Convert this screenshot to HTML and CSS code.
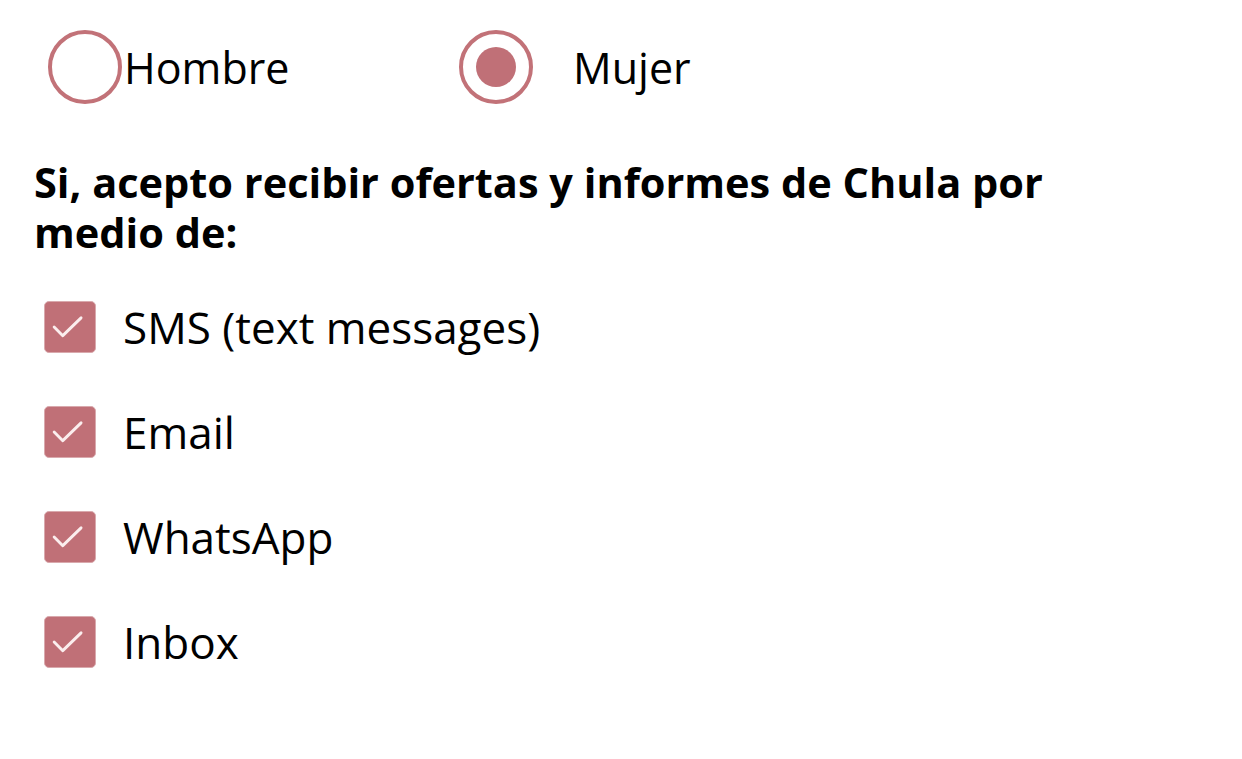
FILE: index.html
```html
<!DOCTYPE html>
<html lang="es">
<head>
  <meta charset="UTF-8" />
  <meta name="viewport" content="width=device-width, initial-scale=1.0"/>
  <title>Preferencias</title>
  <link rel="stylesheet" href="styles.css">
</head>
<body>

  <form class="prefs">
    <div class="gender">
      <label class="radio radio-first">
        <input type="radio" name="gender" value="Hombre">
        <span class="ring"></span>
        <span class="radio-text">Hombre</span>
      </label>
      <label class="radio">
        <input type="radio" name="gender" value="Mujer" checked>
        <span class="ring"></span>
        <span class="radio-text spaced">Mujer</span>
      </label>
    </div>

    <p class="consent">Si, acepto recibir ofertas y informes de Chula por medio de:</p>

    <div class="channels">
      <label class="check">
        <input type="checkbox" checked>
        <span class="box"><svg viewBox="0 0 52 52"><path d="M9.5 26 L18.5 35 L37.5 16.5"/></svg></span>
        SMS (text messages)
      </label>
      <label class="check">
        <input type="checkbox" checked>
        <span class="box"><svg viewBox="0 0 52 52"><path d="M9.5 26 L18.5 35 L37.5 16.5"/></svg></span>
        Email
      </label>
      <label class="check">
        <input type="checkbox" checked>
        <span class="box"><svg viewBox="0 0 52 52"><path d="M9.5 26 L18.5 35 L37.5 16.5"/></svg></span>
        WhatsApp
      </label>
      <label class="check">
        <input type="checkbox" checked>
        <span class="box"><svg viewBox="0 0 52 52"><path d="M9.5 26 L18.5 35 L37.5 16.5"/></svg></span>
        Inbox
      </label>
    </div>
  </form>

</body>
</html>
```

FILE: styles.css
```css
body {
  margin: 0;
  background: #fff;
  color: #000;
  font-family: 'Open Sans', 'Noto Sans', sans-serif;
}

.prefs {
  padding: 30px 34px;
}

.gender {
  display: flex;
  align-items: center;
  padding-left: 14px;
}

.radio {
  display: flex;
  align-items: center;
  font-size: 43px;
  cursor: pointer;
}

.radio-first {
  width: 411px;
}

.radio input,
.check input {
  display: none;
}

.ring {
  box-sizing: border-box;
  width: 74px;
  height: 74px;
  border: 4px solid #c27278;
  border-radius: 50%;
  display: flex;
  align-items: center;
  justify-content: center;
  flex-shrink: 0;
}

.radio input:checked + .ring::after {
  content: "";
  width: 40px;
  height: 40px;
  border-radius: 50%;
  background: #c07077;
}

.radio-text {
  margin-left: 2px;
}

.radio-text.spaced {
  margin-left: 40px;
}

.consent {
  margin: 53px 0 0;
  font-size: 41.5px;
  font-weight: bold;
  line-height: 50px;
  max-width: 1060px;
}

.channels {
  display: flex;
  flex-direction: column;
  gap: 53px;
  margin-top: 44px;
  padding-left: 10px;
}

.check {
  display: flex;
  align-items: center;
  font-size: 44px;
  height: 52px;
  cursor: pointer;
}

.box {
  box-sizing: border-box;
  width: 52px;
  height: 52px;
  border-radius: 5px;
  background: #c07077;
  border: 1px solid #d9a9ad;
  margin-right: 27px;
  flex-shrink: 0;
}

.box svg {
  display: block;
  width: 50px;
  height: 50px;
}

.box path {
  fill: none;
  stroke: #fbeeee;
  stroke-width: 3;
  stroke-linecap: round;
  stroke-linejoin: round;
}
```
